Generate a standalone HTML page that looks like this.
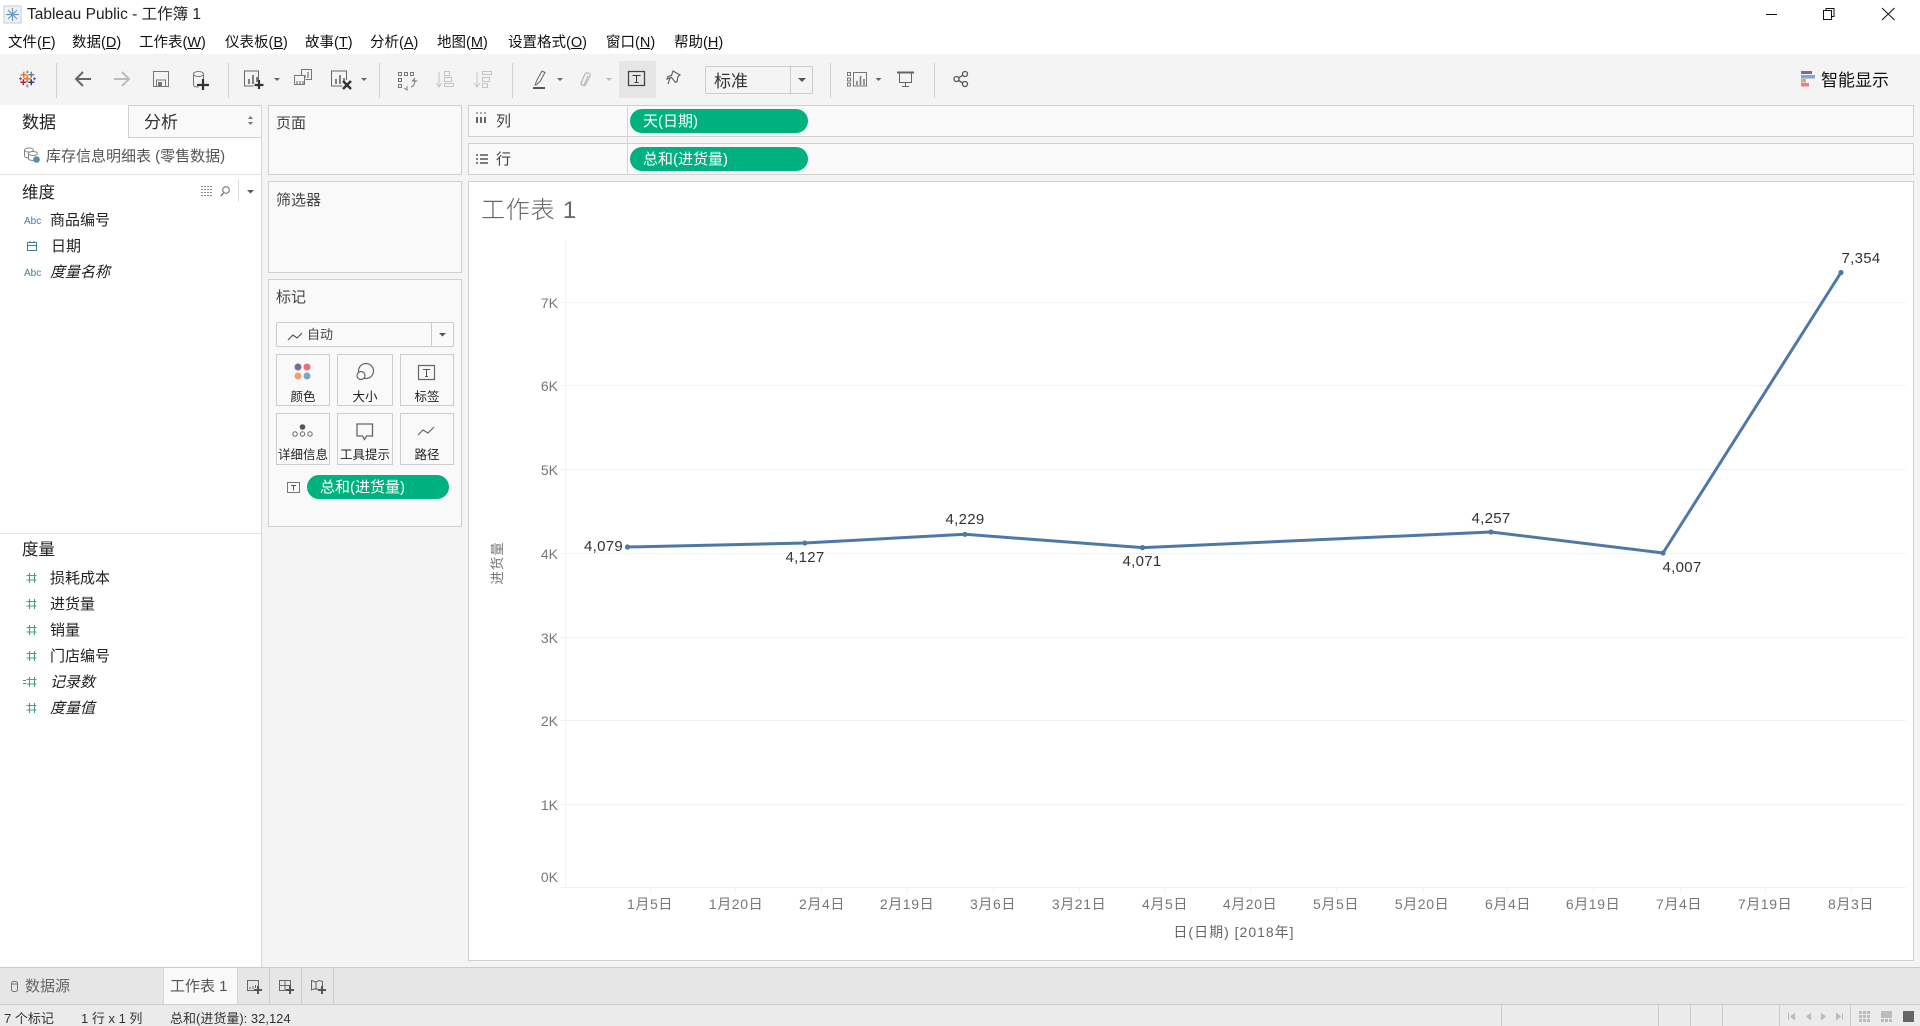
<!DOCTYPE html>
<html lang="zh"><head><meta charset="utf-8"><title>Tableau Public - 工作簿 1</title>
<style>
html,body{margin:0;padding:0;width:1920px;height:1026px;overflow:hidden;background:#fff}
body{position:relative;font-family:"Liberation Sans","Noto Sans CJK SC",sans-serif;color:#222}
.b{position:absolute;box-sizing:border-box}
.t{position:absolute;white-space:nowrap;line-height:20px;font-size:15px}
.c{transform:translateX(-50%)}
.r{transform:translateX(-100%)}
.card{position:absolute;box-sizing:border-box;background:#f9f9f9;border:1px solid #d0d0d0}
.pill{position:absolute;background:#00b180;border-radius:12px;height:24px}
.w{color:#fff}
.m{font-size:14.5px;top:33px;color:#111}
.m u{text-underline-offset:1px}
.lab{font-size:12.5px;color:#222;transform:translateX(-50%)}
.g{color:#777;font-size:14px}
.x{color:#777;font-size:14px;letter-spacing:.6px;transform:translateX(-50%);top:894px}
.d{color:#333;font-size:15px;letter-spacing:.3px}
i{font-style:italic}
svg{position:absolute;left:0;top:0}
</style></head><body>
<!-- backgrounds -->
<div class="b" style="left:0;top:54px;width:1920px;height:913px;background:#f4f4f4"></div>
<div class="b" style="left:0;top:105px;width:262px;height:862px;background:#fff;border-right:1px solid #d6d6d6"></div>
<div class="b" style="left:128px;top:105px;width:133px;height:33px;background:#f9f9f9;border-left:1px solid #d0d0d0;border-top:1px solid #d0d0d0;border-bottom:1px solid #d0d0d0"></div>
<div class="b" style="left:0;top:174px;width:261px;height:1px;background:#e0e0e0"></div>
<div class="b" style="left:0;top:533px;width:261px;height:1px;background:#e0e0e0"></div>
<div class="card" style="left:268px;top:105px;width:194px;height:70px"></div>
<div class="card" style="left:268px;top:181px;width:194px;height:92px"></div>
<div class="card" style="left:268px;top:279px;width:194px;height:248px"></div>
<div class="card" style="left:468px;top:105px;width:1446px;height:32px"></div>
<div class="card" style="left:468px;top:143px;width:1446px;height:32px"></div>
<div class="b" style="left:627px;top:105px;width:1px;height:70px;background:#d6d6d6"></div>
<div class="b" style="left:468px;top:181px;width:1446px;height:780px;background:#fff;border:1px solid #d0d0d0"></div>
<!-- toolbar highlight and select -->
<div class="b" style="left:619px;top:61px;width:37px;height:37px;background:#e6e6e6"></div>
<div class="b" style="left:705px;top:66px;width:108px;height:28px;background:#f4f4f4;border:1px solid #ccc;border-radius:2px"></div>
<div class="b" style="left:790px;top:66px;width:1px;height:28px;background:#ccc"></div>
<!-- bottom bars -->
<div class="b" style="left:0;top:967px;width:1920px;height:37px;background:#e6e6e6;border-top:1px solid #ccc"></div>
<div class="b" style="left:163px;top:968px;width:75px;height:36px;background:#f9f9f9;border-left:1px solid #d6d6d6;border-right:1px solid #d6d6d6"></div>
<div class="b" style="left:269px;top:968px;width:1px;height:36px;background:#ccc"></div>
<div class="b" style="left:301px;top:968px;width:1px;height:36px;background:#ccc"></div>
<div class="b" style="left:333px;top:968px;width:1px;height:36px;background:#ccc"></div>
<div class="b" style="left:0;top:1004px;width:1920px;height:22px;background:#ebebeb;border-top:1px solid #ccc"></div>
<div class="b" style="left:1501px;top:1005px;width:1px;height:21px;background:#ccc"></div>
<div class="b" style="left:1658px;top:1005px;width:1px;height:21px;background:#ccc"></div>
<div class="b" style="left:1690px;top:1005px;width:1px;height:21px;background:#ccc"></div>
<div class="b" style="left:1722px;top:1005px;width:1px;height:21px;background:#ccc"></div>
<div class="b" style="left:1779px;top:1005px;width:1px;height:21px;background:#ccc"></div>
<div class="b" style="left:1850px;top:1005px;width:1px;height:21px;background:#ccc"></div>
<!-- marks card controls -->
<div class="b" style="left:276px;top:322px;width:178px;height:25px;background:#fafafa;border:1px solid #ccc;border-radius:2px"></div>
<div class="b" style="left:431px;top:322px;width:1px;height:25px;background:#ccc"></div>
<div class="b" style="left:276px;top:354px;width:54px;height:52px;border:1px solid #ccc"></div>
<div class="b" style="left:337px;top:354px;width:56px;height:52px;border:1px solid #ccc"></div>
<div class="b" style="left:400px;top:354px;width:54px;height:52px;border:1px solid #ccc"></div>
<div class="b" style="left:276px;top:413px;width:54px;height:52px;border:1px solid #ccc"></div>
<div class="b" style="left:337px;top:413px;width:56px;height:52px;border:1px solid #ccc"></div>
<div class="b" style="left:400px;top:413px;width:54px;height:52px;border:1px solid #ccc"></div>
<!-- pills -->
<div class="pill" style="left:630px;top:109px;width:178px"></div>
<div class="pill" style="left:630px;top:147px;width:178px"></div>
<div class="pill" style="left:307px;top:475px;width:142px"></div>

<svg width="1920" height="1026" viewBox="0 0 1920 1026" fill="none">
<!-- app icon -->
<rect x="4" y="6" width="17" height="17" fill="#eef2f6" stroke="#ccc"/>
<g stroke="#6f9ac0" stroke-width="1.200"><path d="M12.500 8v13M6 14.500h13M8 10l9 9M17 10l-9 9"/></g>
<!-- window controls -->
<path d="M1766 14.500h11" stroke="#111" stroke-width="1"/>
<path d="M1823.500 10.500h8v9h-8zM1826 10.500v-2h8v8h-2.500" stroke="#111"/>
<path d="M1882 8l12.500 12M1894.500 8l-12.500 12" stroke="#111"/>
<!-- logo -->
<g stroke-width="1.500">
<path d="M23.700 71.700v6M20.700 74.700h6" stroke="#e8762b"/>
<path d="M31.300 71.700v6M28.300 74.700h6" stroke="#5b879b"/>
<path d="M23.300 79.300v6M20.300 82.300h6" stroke="#c72035"/>
<path d="M31.300 79.300v6M28.300 82.300h6" stroke="#1f447a"/>
<path d="M27.300 75.200v7M23.800 78.700h7" stroke="#e8762b"/>
<path d="M27.300 70.500v3M25.800 72h3M27.300 84.500v3M25.800 86h3" stroke="#7099a6" stroke-width="1.100"/>
<path d="M20.500 77.200v3M19 78.700h3M34.500 77.200v3M33 78.700h3" stroke="#5b6591" stroke-width="1.100"/>
</g>
<!-- dividers -->
<g stroke="#d2d2d2" stroke-width="1"><path d="M56.500 63v35M228.500 63v35M379.500 63v35M512.500 63v35M830.500 63v35M934.500 63v35"/></g>
<!-- nav -->
<path d="M91 79H76M83 72l-7 7 7 7" stroke="#666" stroke-width="2"/>
<path d="M114 79h15M122 72l7 7-7 7" stroke="#bbb" stroke-width="2"/>
<path d="M153.500 71.500h15v15h-15zM156.500 86v-6h9v6" stroke="#777"/><rect x="158" y="82" width="4" height="4" fill="#777"/>
<path d="M193.500 74v11c0 1.500 3 2 5 2M203.500 74v6" stroke="#777"/><ellipse cx="198.500" cy="74" rx="5" ry="2.500" stroke="#777"/>
<path d="M203 79v11M197 85h12" stroke="#333" stroke-width="2.200"/>
<!-- new sheet -->
<path d="M258.500 80v-9h-14v15h9" stroke="#666"/><path d="M249 84v-5M253 84v-9M257 82v-5" stroke="#666" stroke-width="1.600"/>
<path d="M259 80v9M254.500 85h9" stroke="#333" stroke-width="2.200"/>
<path d="M274 78h6l-3 3z" fill="#666"/>
<!-- duplicate -->
<path d="M301.500 75v-5.500h10v10h-6" stroke="#777"/><path d="M294.500 75.500h10v9h-10z" stroke="#777"/>
<path d="M305 78v-3M308 78v-6M297 84v-3M300 84v-3M303 84v-3" stroke="#777" stroke-width="1.200"/>
<!-- clear -->
<path d="M346.500 80v-9h-15v15h11" stroke="#666"/><path d="M336 84v-5M340 84v-9M344 81v-3" stroke="#666" stroke-width="1.600"/>
<path d="M343 81l8 8M351 81l-8 8" stroke="#333" stroke-width="2.400"/>
<path d="M361 78h6l-3 3z" fill="#666"/>
<!-- swap -->
<g stroke="#777"><path d="M398.500 72.500h3v3h-3zM404.500 72.500h3v3h-3zM410.500 72.500h3v3h-3zM398.500 78.500h3v3h-3zM398.500 84.500h3v3h-3z"/><path d="M411 87c3-1 4-4 4-7M415 78l-2.500 3h5M404 88l3 2v-4"/></g>
<!-- sort -->
<g stroke="#c4c4c4"><path d="M439 72v14M436 83l3 4 3-4M444.500 71.500h5v4h-5zM444.500 77.500h7v4h-7zM444.500 83.500h9v3h-9z"/></g>
<g stroke="#c4c4c4"><path d="M477 72v14M474 83l3 4 3-4M482.500 71.500h9v3h-9zM482.500 77.500h7v4h-7zM482.500 83.500h5v4h-5z"/></g>
<!-- highlighter -->
<path d="M535 85l2-5 5-9 3 1.500-5 9-4 3.500z" stroke="#666"/><path d="M533 88h12" stroke="#555" stroke-width="2"/>
<path d="M557 78h6l-3 3z" fill="#666"/>
<!-- clip -->
<path d="M585 85c-2 1-4 0-4-2l4-9c1-2 6-1 5 2l-5 10M588 76l-4 9" stroke="#bbb" stroke-width="1.300"/>
<path d="M606 78h6l-3 3z" fill="#bbb"/>
<!-- T -->
<path d="M628.500 71.500h16v14h-16z" stroke="#444" stroke-width="1.300"/><path d="M632.500 75.500h8M636.500 75.500v7M634.500 82.500h4" stroke="#333"/>
<!-- pin -->
<path d="M671 72l7 4-2 1.500-1 5-1.500 1-4-5-4.500 1.500 1-2.500 3.500-1zM668 79l-2 6" stroke="#666" stroke-width="1.200" transform="translate(2 -1)"/>
<!-- select arrow -->
<path d="M798 78h8l-4 4z" fill="#555"/>
<!-- show me/present/share -->
<g stroke="#777"><path d="M847.500 72.500h3v3h-3zM847.500 78h3v3h-3zM847.500 83h3v3h-3zM853.500 72.500h13v13.500h-13z"/></g>
<path d="M857 85v-4M860.500 85v-9M864 85v-6" stroke="#777" stroke-width="1.500"/>
<path d="M875.500 78h6l-3 3z" fill="#666"/>
<path d="M897 72.500h17" stroke="#666" stroke-width="2"/><path d="M899.500 73v9.500h12V73M905.500 83v3.500M902 86.500h7" stroke="#666"/>
<g stroke="#555" stroke-width="1.300"><circle cx="965" cy="74" r="2.500"/><circle cx="956.500" cy="79" r="2.500"/><circle cx="965" cy="84" r="2.500"/><path d="M963 75l-4.500 3M958.500 80.500l4.500 2.500"/></g>
<!-- smart -->
<rect x="1801" y="71" width="11" height="3" fill="#7a6a96"/><rect x="1801" y="75" width="14" height="3.500" fill="#7fa6cf"/><rect x="1801" y="79" width="5" height="3.500" fill="#eba06c"/><rect x="1801" y="83" width="8" height="3.500" fill="#ef7b88"/>
<!-- tab arrows -->
<path d="M248 119l2.500-3 2.500 3zM248 122l2.500 3 2.500-3z" fill="#777"/>
<!-- datasource icon -->
<g stroke="#888"><ellipse cx="29" cy="150" rx="4.500" ry="2"/><path d="M24.500 150v6c0 1 2 2 4 2"/><ellipse cx="33" cy="153.500" rx="4.500" ry="2" fill="#fff"/><path d="M28.500 153.500v5c0 1.500 3 2 5 2"/></g>
<circle cx="36.500" cy="159.500" r="3.300" fill="#4f8fb5"/>
<!-- dim icons -->
<path d="M201 186.500h12M201 189.500h12M201 192.500h12M201 195.500h12" stroke="#888" stroke-dasharray="2 1"/>
<circle cx="226" cy="190" r="3.300" stroke="#666"/><path d="M223.500 193l-2.500 3" stroke="#666" stroke-width="1.300"/>
<path d="M238.500 180v22" stroke="#ddd"/><path d="M247 190h7l-3.500 3.500z" fill="#555"/>
<path d="M27.500 242.500h9v8h-9zM27.500 245.500h9M30 241v2M34 241v2" stroke="#3f7e9f"/>
<!-- hash -->
<g stroke="#4a9e80" stroke-width="1.100"><path d="M29.500 573v10M34.500 573v10M26.500 575.500h10M26.500 580h10"/>
<path d="M29.500 599v10M34.500 599v10M26.500 601.500h10M26.500 606h10M29.500 625v10M34.500 625v10M26.500 627.500h10M26.500 632h10M29.500 651v10M34.500 651v10M26.500 653.500h10M26.500 658h10M29.500 677v10M34.500 677v10M26.500 679.500h10M26.500 684h10M23 680.500h3M23 683.500h3M29.500 703v10M34.500 703v10M26.500 705.500h10M26.500 710h10"/></g>
<!-- shelf icons -->
<path d="M477 117v6M481 117v6M485 117v6" stroke="#555" stroke-width="1.800"/><path d="M477 112.500v1M481 112.500v1M485 112.500v1" stroke="#555" stroke-width="2"/>
<path d="M476 155h2M476 159h2M476 163h2M480 155h8M480 159h8M480 163h8" stroke="#555" stroke-width="1.500"/>
<!-- marks icons -->
<path d="M288 340l5-5 4 3 5-5" stroke="#555" stroke-width="1.200"/>
<path d="M439 333h7l-3.500 3.500z" fill="#555"/>
<circle cx="298" cy="367" r="3.500" fill="#7f6a94"/><circle cx="307" cy="367" r="3.500" fill="#ee6b7e"/><circle cx="298" cy="376" r="3.500" fill="#efa06e"/><circle cx="307" cy="376" r="3.500" fill="#7fa4cc"/>
<circle cx="366" cy="371" r="7.500" stroke="#666" stroke-width="1.200"/><circle cx="361" cy="375.500" r="4" stroke="#666" fill="#f9f9f9" stroke-width="1.200"/>
<path d="M418.500 365.500h16v14h-16z" stroke="#666" stroke-width="1.200"/><path d="M423 369.500h7M426.500 369.500v7M425 376.500h3" stroke="#555"/>
<circle cx="302.500" cy="427" r="2.800" fill="#555"/><circle cx="295" cy="434" r="2.200" stroke="#666"/><circle cx="302.500" cy="434" r="2.200" stroke="#666"/><circle cx="310" cy="434" r="2.200" stroke="#666"/>
<path d="M357 424h15.500v12h-6l-2 3.500-2-3.500h-5.500z" stroke="#666" stroke-width="1.300"/>
<path d="M418 435l5-5 5 3 6-6" stroke="#666" stroke-width="1.200"/>
<path d="M287.500 482.500h12v10h-12z" stroke="#777"/><path d="M291 485.500h5M293.500 485.500v5" stroke="#555"/>
<!-- bottom icons -->
<g stroke="#777"><rect x="11.500" y="981.500" width="6" height="10" rx="2"/><path d="M12 984h5"/></g>
<path d="M247.500 980.500h11v10h-11z" stroke="#666"/>
<path d="M250 989v-2M253 989v-3M255.500 988v-3" stroke="#666"/>
<path d="M258 986v8M254 990h8" stroke="#555" stroke-width="2"/>
<path d="M279.500 980.500h11v10h-11zM279.500 985.500h11M285 980.500v10" stroke="#666"/>
<path d="M290 986v8M286 990h8" stroke="#555" stroke-width="2"/>
<path d="M311.500 980.500l4 1.500 4-1.500 3 1v7l-3 1.500-4-1.500-4 1.500zM316 982v8" stroke="#666"/>
<path d="M322 986v8M318 990h8" stroke="#555" stroke-width="2"/>
<!-- status nav -->
<g fill="#bbb"><path d="M1788 1013h1v7h-1zM1795 1012.500v8l-5-4zM1811 1012.500v8l-5-4zM1821 1012.500v8l5-4zM1836 1012.500v8l5-4zM1842 1013h1v7h-1z"/></g>
<g fill="#bbb"><path d="M1859 1011h3v3h-3zM1863 1011h3v3h-3zM1867 1011h3v3h-3zM1859 1015h3v3h-3zM1863 1015h3v3h-3zM1867 1015h3v3h-3zM1859 1019h3v3h-3zM1863 1019h3v3h-3zM1867 1019h3v3h-3z"/>
<path d="M1881 1011h11v7h-11zM1881 1019h3v3h-3zM1885 1019h3v3h-3zM1889 1019h3v3h-3z"/></g>
<rect x="1903" y="1011" width="11" height="11" fill="#666"/>
<!-- chart grid -->
<g stroke="#f2f2f2" stroke-width="1"><path d="M560 302.500H1906M560 385.500H1906M560 469.500H1906M560 553.500H1906M560 637.500H1906M560 720.500H1906M560 804.500H1906M560 887.500H1906M565.500 240V887"/>
<path d="M650.500 888v5M735.500 888v5M821.500 888v5M907.500 888v5M993.500 888v5M1079.500 888v5M1164.500 888v5M1250.500 888v5M1336.500 888v5M1423.500 888v5M1507.500 888v5M1593.500 888v5M1680.500 888v5M1765.500 888v5M1851.500 888v5"/></g>
<polyline points="627.500,547 804.800,543 965,534.300 1142.500,547.600 1491,532 1663,553 1841,272.500" stroke="#4e79a7" stroke-width="3" stroke-linejoin="round"/>
<g fill="#4e79a7"><circle cx="627.500" cy="547" r="2.600"/><circle cx="804.800" cy="543" r="2.600"/><circle cx="965" cy="534.300" r="2.600"/><circle cx="1142.500" cy="547.600" r="2.600"/><circle cx="1491" cy="532" r="2.600"/><circle cx="1663" cy="553" r="2.600"/><circle cx="1841" cy="272.500" r="2.600"/></g>
</svg>

<!-- title + menu -->
<div class="t" style="left:27px;top:5px;font-size:15.500px;color:#222">Tableau Public - 工作簿 1</div>
<div class="t m" style="left:8px">文件(<u>F</u>)</div>
<div class="t m" style="left:72px">数据(<u>D</u>)</div>
<div class="t m" style="left:139px">工作表(<u>W</u>)</div>
<div class="t m" style="left:225px">仪表板(<u>B</u>)</div>
<div class="t m" style="left:305px">故事(<u>T</u>)</div>
<div class="t m" style="left:370px">分析(<u>A</u>)</div>
<div class="t m" style="left:437px">地图(<u>M</u>)</div>
<div class="t m" style="left:508px">设置格式(<u>O</u>)</div>
<div class="t m" style="left:606px">窗口(<u>N</u>)</div>
<div class="t m" style="left:674px">帮助(<u>H</u>)</div>
<!-- toolbar text -->
<div class="t" style="left:714px;top:72px;font-size:17px;color:#333">标准</div>
<div class="t" style="left:1821px;top:71px;font-size:17px;color:#111">智能显示</div>
<!-- left pane -->
<div class="t" style="left:22px;top:113px;font-size:17px;color:#222">数据</div>
<div class="t" style="left:144px;top:113px;font-size:17px;color:#333">分析</div>
<div class="t" style="left:46px;top:147px;color:#555">库存信息明细表 (零售数据)</div>
<div class="t" style="left:22px;top:183px;font-size:16.500px;color:#222">维度</div>
<div class="t" style="left:24px;top:212px;font-size:10px;color:#3f7e9f">Abc</div>
<div class="t" style="left:50px;top:211px">商品编号</div>
<div class="t" style="left:51px;top:237px">日期</div>
<div class="t" style="left:24px;top:264px;font-size:10px;color:#3f7e9f">Abc</div>
<div class="t" style="left:50px;top:263px"><i>度量名称</i></div>
<div class="t" style="left:22px;top:540px;font-size:16.500px;color:#222">度量</div>
<div class="t" style="left:50px;top:569px">损耗成本</div>
<div class="t" style="left:50px;top:595px">进货量</div>
<div class="t" style="left:50px;top:621px">销量</div>
<div class="t" style="left:50px;top:647px">门店编号</div>
<div class="t" style="left:50px;top:673px"><i>记录数</i></div>
<div class="t" style="left:50px;top:699px"><i>度量值</i></div>
<!-- cards -->
<div class="t" style="left:276px;top:114px;color:#444">页面</div>
<div class="t" style="left:276px;top:191px;color:#444">筛选器</div>
<div class="t" style="left:276px;top:288px;color:#444">标记</div>
<div class="t" style="left:307px;top:325px;font-size:13px;color:#444">自动</div>
<div class="t lab" style="left:303px;top:387px">颜色</div>
<div class="t lab" style="left:365px;top:387px">大小</div>
<div class="t lab" style="left:427px;top:387px">标签</div>
<div class="t lab" style="left:303px;top:445px">详细信息</div>
<div class="t lab" style="left:365px;top:445px">工具提示</div>
<div class="t lab" style="left:427px;top:445px">路径</div>
<div class="t w" style="left:320px;top:478px">总和(进货量)</div>
<!-- shelves -->
<div class="t" style="left:496px;top:112px;color:#444">列</div>
<div class="t" style="left:496px;top:150px;color:#444">行</div>
<div class="t w" style="left:643px;top:112px">天(日期)</div>
<div class="t w" style="left:643px;top:150px">总和(进货量)</div>
<!-- chart text -->
<div class="t" style="left:481px;top:201px;font-size:24px;line-height:20px;color:#666;font-weight:300;letter-spacing:.8px">工作表 1</div>
<div class="t g r" style="left:558px;top:293px">7K</div>
<div class="t g r" style="left:558px;top:376px">6K</div>
<div class="t g r" style="left:558px;top:460px">5K</div>
<div class="t g r" style="left:558px;top:544px">4K</div>
<div class="t g r" style="left:558px;top:628px">3K</div>
<div class="t g r" style="left:558px;top:711px">2K</div>
<div class="t g r" style="left:558px;top:795px">1K</div>
<div class="t g r" style="left:558px;top:867px">0K</div>
<div class="t x" style="left:650px">1月5日</div><div class="t x" style="left:736px">1月20日</div><div class="t x" style="left:822px">2月4日</div><div class="t x" style="left:907px">2月19日</div><div class="t x" style="left:993px">3月6日</div><div class="t x" style="left:1079px">3月21日</div><div class="t x" style="left:1165px">4月5日</div><div class="t x" style="left:1250px">4月20日</div><div class="t x" style="left:1336px">5月5日</div><div class="t x" style="left:1422px">5月20日</div><div class="t x" style="left:1508px">6月4日</div><div class="t x" style="left:1593px">6月19日</div><div class="t x" style="left:1679px">7月4日</div><div class="t x" style="left:1765px">7月19日</div><div class="t x" style="left:1851px">8月3日</div>
<div class="t" style="left:1234px;top:922px;transform:translateX(-50%);font-size:14px;letter-spacing:1px;color:#666">日(日期) [2018年]</div>
<div class="t" style="left:498px;top:553px;transform:translate(-50%,0) rotate(-90deg);font-size:13.500px;color:#777;letter-spacing:1px">进货量</div>
<div class="t d r" style="left:623px;top:537px">4,079</div>
<div class="t d c" style="left:805px;top:548px">4,127</div>
<div class="t d c" style="left:965px;top:510px">4,229</div>
<div class="t d c" style="left:1142px;top:552px">4,071</div>
<div class="t d c" style="left:1491px;top:509px">4,257</div>
<div class="t d c" style="left:1682px;top:558px">4,007</div>
<div class="t d c" style="left:1861px;top:249px">7,354</div>
<!-- bottom -->
<div class="t" style="left:25px;top:977px;color:#666">数据源</div>
<div class="t" style="left:170px;top:977px;color:#555">工作表 1</div>
<div class="t" style="left:4px;top:1009px;font-size:13px;color:#333">7 个标记</div>
<div class="t" style="left:81px;top:1009px;font-size:13px;color:#333">1 行 x 1 列</div>
<div class="t" style="left:170px;top:1009px;font-size:13px;color:#333">总和(进货量): 32,124</div>
</body></html>
